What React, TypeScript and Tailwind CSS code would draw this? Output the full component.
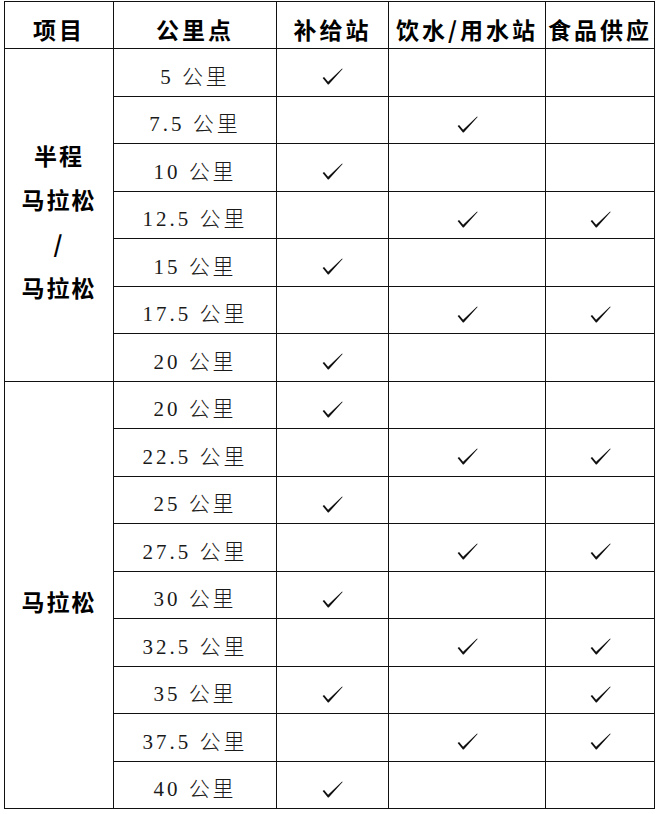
import React from "react";

type Row = { km: string; a: boolean; b: boolean; c: boolean };

const sec1: Row[] = [
  { km: "5", a: true, b: false, c: false },
  { km: "7.5", a: false, b: true, c: false },
  { km: "10", a: true, b: false, c: false },
  { km: "12.5", a: false, b: true, c: true },
  { km: "15", a: true, b: false, c: false },
  { km: "17.5", a: false, b: true, c: true },
  { km: "20", a: true, b: false, c: false },
];

const sec2: Row[] = [
  { km: "20", a: true, b: false, c: false },
  { km: "22.5", a: false, b: true, c: true },
  { km: "25", a: true, b: false, c: false },
  { km: "27.5", a: false, b: true, c: true },
  { km: "30", a: true, b: false, c: false },
  { km: "32.5", a: false, b: true, c: true },
  { km: "35", a: true, b: false, c: true },
  { km: "37.5", a: false, b: true, c: true },
  { km: "40", a: true, b: false, c: false },
];

function Check() {
  return (
    <svg width="21" height="17" viewBox="0 0 21 17" className="mt-[1px]">
      <path d="M0.6 9.9 L2.1 8.9 L6.1 13.7 L20.1 0.5 L20.6 1.0 L6.7 16.6 L5.9 16.6 Z" fill="#111" />
    </svg>
  );
}

const cell = "bg-white flex items-center justify-center pt-2";
const head =
  "bg-white flex items-center justify-center pt-2 text-[23px] font-bold tracking-[3px] text-black";
const km =
  "bg-white flex items-center justify-center pt-[10px] text-[21px] font-light tracking-[3px] text-[#1a1a1a]";
const side =
  "bg-white flex flex-col items-center justify-center pt-3 text-[23px] font-bold tracking-[2px] text-black leading-[44px]";

function DataRows({ rows }: { rows: Row[] }) {
  return (
    <>
      {rows.map((r, i) => (
        <React.Fragment key={i}>
          <div className={km} style={{ fontFamily: '"Liberation Serif", "Noto Sans CJK SC", serif' }}>
            {r.km} 公里
          </div>
          <div className={cell}>{r.a ? <Check /> : null}</div>
          <div className={cell}>{r.b ? <Check /> : null}</div>
          <div className={cell}>{r.c ? <Check /> : null}</div>
        </React.Fragment>
      ))}
    </>
  );
}

export default function App() {
  return (
    <div
      className="w-[660px] h-[814px] bg-white pt-px pl-[4px]"
      style={{ fontFamily: '"Noto Sans CJK SC", sans-serif' }}
    >
      <div className="w-[651px] bg-[#111] p-px grid gap-px grid-cols-[108px_162px_111px_156px_108px] grid-rows-[46px_repeat(16,46.5px)]">
        <div className={head}>项目</div>
        <div className={head}>公里点</div>
        <div className={head}>补给站</div>
        <div className={head + " tracking-[2px]"}>饮水/用水站</div>
        <div className={head + " tracking-[1px]"}>食品供应</div>

        <div className={side + " row-span-7"}>
          <span>半程</span>
          <span>马拉松</span>
          <span>/</span>
          <span>马拉松</span>
        </div>
        <DataRows rows={sec1} />

        <div className={side + " row-span-9"}>
          <span>马拉松</span>
        </div>
        <DataRows rows={sec2} />
      </div>
    </div>
  );
}
